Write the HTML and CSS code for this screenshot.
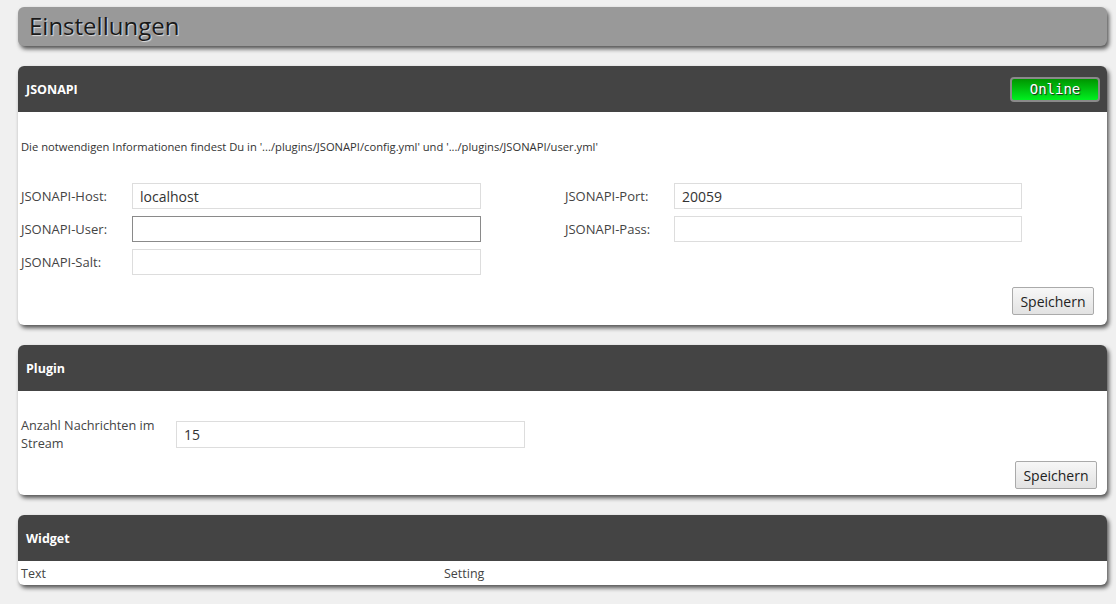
FILE: index.html
```html
<!DOCTYPE html>
<html lang="de">
<head>
    <meta charset="UTF-8">
    <meta name="viewport" content="width=device-width, initial-scale=1.0">
    <title>Einstellungen</title>
    <link rel="stylesheet" href="styles.css">
</head>
<body>
    <div class="page">
        <h1 class="page-title">Einstellungen</h1>

        <div class="panel">
            <div class="panel-head">
                <span class="panel-name">JSONAPI</span>
                <span class="status online">Online</span>
            </div>
            <div class="panel-body">
                <p class="hint">Die notwendigen Informationen findest Du in '.../plugins/JSONAPI/config.yml' und '.../plugins/JSONAPI/user.yml'</p>
                <div class="form-grid">
                    <label class="field-label">JSONAPI-Host:</label>
                    <input class="field" type="text" value="localhost">
                    <span></span>
                    <label class="field-label">JSONAPI-Port:</label>
                    <input class="field" type="text" value="20059">

                    <label class="field-label">JSONAPI-User:</label>
                    <input class="field focused" type="text" value="">
                    <span></span>
                    <label class="field-label">JSONAPI-Pass:</label>
                    <input class="field" type="password" value="">

                    <label class="field-label">JSONAPI-Salt:</label>
                    <input class="field" type="text" value="">
                </div>
                <div class="actions">
                    <button class="btn" type="button">Speichern</button>
                </div>
            </div>
        </div>

        <div class="panel">
            <div class="panel-head">
                <span class="panel-name">Plugin</span>
            </div>
            <div class="panel-body plugin-body">
                <div class="plugin-row">
                    <label class="field-label wide">Anzahl Nachrichten im Stream</label>
                    <input class="field" type="text" value="15">
                </div>
                <div class="actions">
                    <button class="btn" type="button">Speichern</button>
                </div>
            </div>
        </div>

        <div class="panel">
            <div class="panel-head">
                <span class="panel-name">Widget</span>
            </div>
            <div class="widget-table">
                <span>Text</span>
                <span>Setting</span>
            </div>
        </div>
    </div>
</body>
</html>
```

FILE: styles.css
```css
body {
    margin: 0;
    background: #f0f0f0;
    font-family: "Open Sans", "Liberation Sans", sans-serif;
    color: #333;
}

.page {
    padding: 7px 9px 20px 18px;
    display: flex;
    flex-direction: column;
    gap: 20px;
}

.page-title {
    margin: 0;
    height: 39px;
    line-height: 37px;
    padding: 0 11px;
    font-size: 24px;
    font-weight: 400;
    color: #1a1a1a;
    background: #999;
    border-radius: 6px;
    text-shadow: 1px 1px 1px #ddd;
    box-shadow: 2px 3px 4px rgba(0, 0, 0, 0.65);
}

.panel {
    background: #fff;
    border-radius: 6px;
    overflow: hidden;
    box-shadow: 2px 3px 4px rgba(0, 0, 0, 0.65);
}

.panel-head {
    height: 46px;
    background: #444;
    display: flex;
    align-items: center;
    justify-content: space-between;
    padding: 0 7px 0 8px;
}

.panel-name {
    color: #fff;
    font-size: 12.5px;
    font-weight: 700;
}

.status {
    width: 86px;
    height: 21px;
    line-height: 21px;
    text-align: center;
    border: 2px solid #8a8a8a;
    border-radius: 4px;
    font-family: "DejaVu Sans Mono", "Liberation Mono", monospace;
    font-size: 14px;
    color: #fff;
    text-shadow: 1px 1px 1px #222;
}

.status.online {
    background: linear-gradient(#009400, #00f020);
}

.panel-body {
    padding: 0 3px;
}

.hint {
    margin: 0;
    padding-top: 28px;
    font-size: 11.2px;
    line-height: 14px;
}

.form-grid {
    margin-top: 29px;
    display: grid;
    grid-template-columns: 111px 349px 84px 109px 348px;
    grid-auto-rows: 26px;
    row-gap: 7px;
    align-items: center;
}

.field-label {
    font-size: 13px;
    color: #444;
}

.field {
    box-sizing: border-box;
    height: 100%;
    width: 100%;
    margin: 0;
    border: 1px solid #ddd;
    padding: 0 7px;
    font-family: "Open Sans", "Liberation Sans", sans-serif;
    font-size: 14px;
    color: #333;
    background: #fff;
    outline: none;
}

.field.focused {
    border-color: #8a8a8a;
}

.actions {
    display: flex;
    justify-content: flex-end;
    padding: 12px 10px 10px 0;
}

.btn {
    width: 82px;
    height: 28px;
    padding: 0;
    border: 1px solid #aaa;
    border-radius: 2px;
    background: linear-gradient(#f7f7f7, #e2e2e2);
    font-family: "Open Sans", "Liberation Sans", sans-serif;
    font-size: 14px;
    color: #222;
}

.plugin-body {
    padding-top: 25px;
}

.plugin-row {
    display: grid;
    grid-template-columns: 155px 349px;
    align-items: center;
}

.plugin-row .field {
    height: 27px;
}

.field-label.wide {
    font-size: 12.7px;
    line-height: 18px;
}

.plugin-body .actions {
    padding: 9px 7px 6px 0;
}

.widget-table {
    display: grid;
    grid-template-columns: 423px 1fr;
    height: 24px;
    align-items: center;
    padding: 0 3px;
    font-size: 12.5px;
    color: #444;
}
```
